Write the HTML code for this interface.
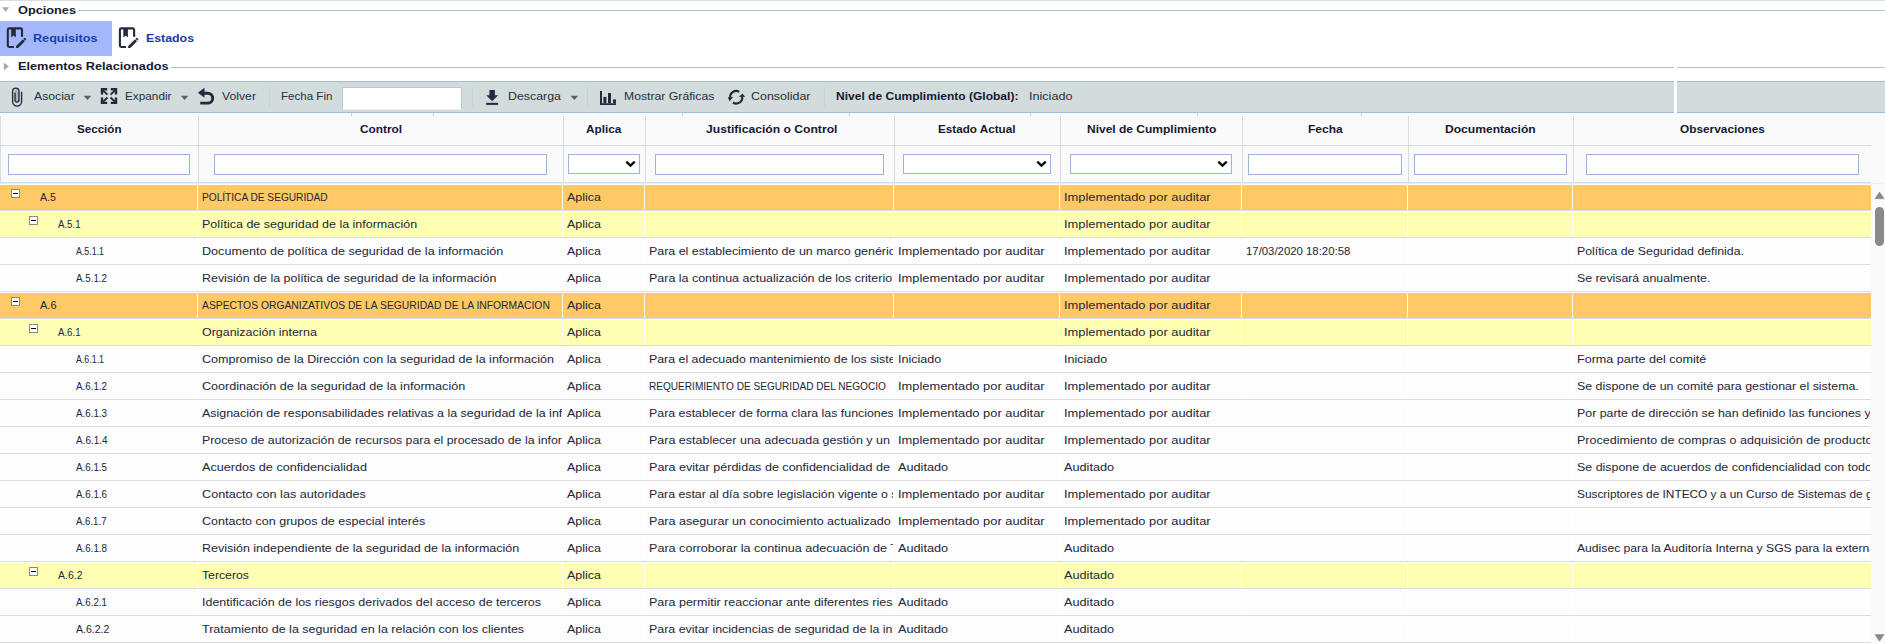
<!DOCTYPE html>
<html lang="es">
<head>
<meta charset="utf-8">
<title>Requisitos</title>
<style>
*{box-sizing:border-box;margin:0;padding:0}
html,body{width:1885px;height:644px;overflow:hidden;background:#fff}
body{position:relative;font-family:"Liberation Sans",sans-serif;font-size:11.5px;color:#23263a}
.abs{position:absolute}
.t{display:inline-block;transform-origin:0 50%;white-space:nowrap}
/* top */
#topline{position:absolute;left:0;top:0;width:1885px;height:1px;background:#d9e0e0}
.leg{position:absolute;left:18px;font-weight:bold;font-size:11.5px;line-height:16px;white-space:nowrap;color:#151931;transform-origin:0 50%}
.legline{position:absolute;height:1px;background:#a9c0de}
.tri{position:absolute;width:0;height:0}
.tab{position:absolute;top:21px;height:35px}
.tabt{position:absolute;top:29.800px;font-weight:bold;font-size:11.5px;line-height:16px;white-space:nowrap;transform-origin:0 50%}
/* toolbar */
#tb{position:absolute;left:0;top:81px;width:1885px;height:32px;background:#d3dcdc;border-top:1px solid #a3bad9;border-bottom:1px solid #a3bad9}
.tbt{position:absolute;top:6px;line-height:16px;white-space:nowrap;transform-origin:0 50%;color:#2a2d40}
.tbs{position:absolute;top:5px;width:1px;height:20px;background:#bfd2e8}
.dd{position:absolute;top:13.800px;width:0;height:0;border-left:3.800px solid transparent;border-right:3.800px solid transparent;border-top:4.300px solid #565d6a}
.ic{position:absolute}
/* header */
#hd{position:absolute;left:0;top:113px;width:1885px;height:71px;background:#fafafa}
.ht{position:absolute;top:8px;line-height:16px;font-weight:bold;white-space:nowrap;transform-origin:0 50%;color:#151931}
.hs{position:absolute;top:3px;width:1px;height:67px;background:#d5dcdc}
#hl1{position:absolute;left:0;top:32px;width:1871px;height:1px;background:#d5dcdc}
#hl2{position:absolute;left:0;top:69px;width:1871px;height:2px;background:linear-gradient(#d5dcdc 50%,#e9eded 50%)}
#hl3{position:absolute;left:1871px;top:70px;width:14px;height:1px;background:#ececec}
.fin,.fse{position:absolute;top:41px;height:21px;background:#fff;border:1px solid #9ab5d9;display:block}
.fse{height:20px}
.fse svg{position:absolute;right:2.600px;top:5.300px}
/* grid */
.row{position:absolute;left:0;width:1871px;height:27px;border-top:1px solid #fff;border-bottom:1px solid #d8dede;background:#fdfdfd}
.r0{background:#ffc966}
.r1{background:#ffffb3}
.c{position:absolute;top:0;height:25px;line-height:25px;padding-left:4px;overflow:hidden;white-space:nowrap;border-left:1px solid rgba(255,255,255,.92);margin-left:-1px}
.c0{padding-left:0;border-left:none;margin-left:0}
.ex{position:absolute;top:4px;width:9px;height:9px;background:#fff;border:1px solid #888}
.ex:after{content:"";position:absolute;left:1px;top:3px;width:5px;height:1px;background:#000}
/* scrollbar */
#sb{position:absolute;left:1871px;top:184px;width:14px;height:460px;background:#fafafa}
#sbt{position:absolute;left:4px;top:23px;width:9px;height:38.500px;border-radius:4.500px;background:#8a8a8a}
</style>
</head>
<body>
<div id="topline"></div>

<!-- Opciones -->

<span class="leg" style="top:1.800px;transform:scaleX(1.1068)">Opciones</span>
<i class="legline" style="left:78px;top:10px;width:1807px"></i>

<div class="tab" style="left:0;width:112px;background:#a6b8fc"></div>
<span class="tabt" style="left:33px;color:#1740b0;transform:scaleX(1.0972)">Requisitos</span>
<span class="tabt" style="left:145.800px;color:#1b39a2;transform:scaleX(1.0729)">Estados</span>

<!-- Elementos Relacionados -->

<span class="leg" style="top:58.400px;transform:scaleX(1.1056)">Elementos Relacionados</span>
<i class="legline" style="left:171px;top:67px;width:1714px"></i>

<!-- toolbar -->
<div id="tb">
  <span class="tbt" style="left:34.400px;transform:scaleX(1.0614)">Asociar</span>
  <span class="tbt" style="left:125.400px;transform:scaleX(1.0245)">Expandir</span>
  <span class="tbt" style="left:222px;transform:scaleX(1.0638)">Volver</span>
  <i class="tbs" style="left:269px"></i>
  <span class="tbt" style="left:281.400px;transform:scaleX(1.0052)">Fecha Fin</span>
  <i class="abs" style="left:342px;top:5px;width:120px;height:23px;background:#fff;border:1px solid #b5c8e2;border-bottom-color:#e8eef4"></i>
  <i class="tbs" style="left:472px"></i>
  <span class="tbt" style="left:508.200px;transform:scaleX(1.0769)">Descarga</span>
  <i class="tbs" style="left:587px"></i>
  <span class="tbt" style="left:623.700px;transform:scaleX(1.0625)">Mostrar Gráficas</span>
  <span class="tbt" style="left:751.300px;transform:scaleX(1.0823)">Consolidar</span>
  <i class="tbs" style="left:824px"></i>
  <span class="tbt" style="left:836.200px;font-weight:bold;color:#151931;transform:scaleX(1.0457)">Nivel de Cumplimiento (Global):</span>
  <span class="tbt" style="left:1028.800px;transform:scaleX(1.0949)">Iniciado</span>
</div>

<!-- icons overlay (page coordinates) -->
<svg class="abs" style="left:0;top:0;pointer-events:none;z-index:5" width="1885" height="644" viewBox="0 0 1885 644">

 <!-- triangles -->
 <path d="M2 7.300H9.200L5.600 12.100Z" fill="#a9a9a9"/>
 <path d="M3.900 62.600L8.900 66.450L3.900 70.300Z" fill="#a9a9a9"/>
 <g fill="#59606c">
  <path d="M83.700 95.800H91.300L87.500 100.100Z"/>
  <path d="M180.800 95.800H188.400L184.600 100.100Z"/>
  <path d="M570.600 95.800H578.200L574.400 100.100Z"/>
 </g>
 <g fill="#8a8a8a">
  <path d="M1874.900 198.700L1879.500 192L1884.100 198.700Z" stroke="#8a8a8a" stroke-width="0.600" stroke-linejoin="round"/>
  <path d="M1874.900 634.600L1879.500 641.200L1884.100 634.600Z" stroke="#8a8a8a" stroke-width="0.600" stroke-linejoin="round"/>
 </g>
 <!-- tab icon 1 -->
 <g id="tabicon">
  <path d="M13.900 47H9.200A1.400 1.400 0 0 1 7.800 45.600V29.800A1.400 1.400 0 0 1 9.200 28.400H20.600A1.400 1.400 0 0 1 22 29.800V36.800" fill="none" stroke="#222a3c" stroke-width="2.100"/>
  <path d="M22 36.800 L22 34.500 L23.050 34.500 L23.050 36 L21.200 37.800 Z" fill="#222a3c"/>
  <path d="M11.200 28.400H15.800V37.400L13.500 35.600L11.200 37.400Z" fill="#222a3c"/>
  <path d="M16.100 46 L22.900 39.200 L24.900 41.200 L18.100 48 L16 48.100 Z" fill="#222a3c"/>
  <path transform="translate(-0.500 0.500)" d="M23.900 38.200 L24.500 37.600 a0.700 0.700 0 0 1 1 0 L26.500 38.600 a0.700 0.700 0 0 1 0 1 L25.900 40.200 Z" fill="#222a3c"/>
 </g>
 <use href="#tabicon" x="112.100" y="0"/>

 <!-- paperclip -->
 <rect x="15" y="88.500" width="4" height="13.500" rx="2" fill="#aab4bc"/>
 <path d="M21.600 92.200V101.600A4.500 4.500 0 0 1 12.600 101.600V91.300A3.200 3.200 0 0 1 19 91.300V100.100A2 2 0 0 1 15 100.100V93" fill="none" stroke="#262d3e" stroke-width="1.400" stroke-linecap="round"/>

 <!-- expand arrows -->
 <g stroke="#232b3d" stroke-width="2.400" fill="none">
  <path d="M107.200 89.300H102V94.600"/>
  <path d="M110.800 89.300H116V94.600"/>
  <path d="M107.200 102.900H102V97.600"/>
  <path d="M110.800 102.900H116V97.600"/>
 </g>
 <g stroke="#232b3d" stroke-width="1.900" fill="none">
  <path d="M102.500 89.800L107.400 94.700M115.500 89.800L110.600 94.700M102.500 102.400L107.400 97.500M115.500 102.400L110.600 97.500"/>
 </g>

 <!-- undo -->
 <path d="M203.500 93.200H207.700A4.950 4.950 0 0 1 207.700 103.100H200.200" fill="none" stroke="#232b3d" stroke-width="2.900"/>
 <path d="M197.900 92.700L204.500 87.800V97.700Z" fill="#232b3d"/>

 <!-- download -->
 <path d="M489.400 90.100H494.900V95.200H498.100L492.150 101.200L486.200 95.200H489.400Z" fill="#232b3d"/>
 <rect x="486.200" y="102.800" width="11.900" height="2.100" fill="#232b3d"/>

 <!-- chart -->
 <path d="M600 91H602V103.200H616V105H600Z" fill="#232b3d"/>
 <rect x="603.400" y="96.900" width="3" height="6.300" fill="#232b3d"/>
 <rect x="608" y="93" width="3" height="10.200" fill="#232b3d"/>
 <rect x="613" y="99.400" width="3" height="3.800" fill="#232b3d"/>

 <!-- sync -->
 <path d="M739.300 91.800A6.050 6.050 0 0 0 730.200 97.600" fill="none" stroke="#1f2739" stroke-width="2.100"/>
 <path d="M727.800 97.300L733.100 96.900L729.600 101.200Z" fill="#1f2739"/>
 <path d="M732.900 102.500A6.050 6.050 0 0 0 742.250 96.800" fill="none" stroke="#1f2739" stroke-width="2.100"/>
 <path d="M738.900 97L745.200 96.800L742.400 93.500Z" fill="#1f2739"/>
</svg>
<i class="abs" style="left:1674px;top:43px;width:3px;height:70px;background:#fff"></i>

<!-- header -->
<div id="hd">
<i id="hl1"></i><i id="hl2"></i><i id="hl3"></i>
<span class="ht" style="left:77px;transform:scaleX(1.0090)">Sección</span>
<span class="ht" style="left:359.5px;transform:scaleX(1.0274)">Control</span>
<span class="ht" style="left:586.3px;transform:scaleX(1.0229)">Aplica</span>
<span class="ht" style="left:706.2px;transform:scaleX(1.0547)">Justificación o Control</span>
<span class="ht" style="left:938px;transform:scaleX(1.0159)">Estado Actual</span>
<span class="ht" style="left:1086.5px;transform:scaleX(1.0431)">Nivel de Cumplimiento</span>
<span class="ht" style="left:1307.8px;transform:scaleX(1.0410)">Fecha</span>
<span class="ht" style="left:1445.3px;transform:scaleX(1.0515)">Documentación</span>
<span class="ht" style="left:1680.2px;transform:scaleX(1.0296)">Observaciones</span>
<i class="hs" style="left:0px"></i>
<i class="hs" style="left:198px"></i>
<i class="hs" style="left:563px"></i>
<i class="hs" style="left:645px"></i>
<i class="hs" style="left:894px"></i>
<i class="hs" style="left:1060px"></i>
<i class="hs" style="left:1242px"></i>
<i class="hs" style="left:1408px"></i>
<i class="hs" style="left:1573px"></i>
<i class="fin" style="left:8px;width:182px"></i>
<i class="fin" style="left:214px;width:333px"></i>
<i class="fse" style="left:568px;width:72px"><svg viewBox="0 0 11 8" width="11" height="8"><path d="M1.300 1.700 L5.500 5.700 L9.700 1.700" fill="none" stroke="#0a0a0a" stroke-width="2.300" stroke-linejoin="miter"/></svg></i>
<i class="fin" style="left:655px;width:229px"></i>
<i class="fse" style="left:903px;width:148px"><svg viewBox="0 0 11 8" width="11" height="8"><path d="M1.300 1.700 L5.500 5.700 L9.700 1.700" fill="none" stroke="#0a0a0a" stroke-width="2.300" stroke-linejoin="miter"/></svg></i>
<i class="fse" style="left:1070px;width:162px"><svg viewBox="0 0 11 8" width="11" height="8"><path d="M1.300 1.700 L5.500 5.700 L9.700 1.700" fill="none" stroke="#0a0a0a" stroke-width="2.300" stroke-linejoin="miter"/></svg></i>
<i class="fin" style="left:1248px;width:154px"></i>
<i class="fin" style="left:1414px;width:153px"></i>
<i class="fin" style="left:1586px;width:273px"></i>
</div>
<i class="abs" style="left:351px;top:113px;width:1px;height:3px;background:#cdd5d8"></i><i class="abs" style="left:433px;top:113px;width:1px;height:3px;background:#cdd5d8"></i><i class="abs" style="left:682px;top:113px;width:1px;height:3px;background:#cdd5d8"></i><i class="abs" style="left:849px;top:113px;width:1px;height:3px;background:#cdd5d8"></i><i class="abs" style="left:1030px;top:113px;width:1px;height:3px;background:#cdd5d8"></i><i class="abs" style="left:1197px;top:113px;width:1px;height:3px;background:#cdd5d8"></i><i class="abs" style="left:1361px;top:113px;width:1px;height:3px;background:#cdd5d8"></i>

<!-- grid -->
<div class="row r0" style="top:184px"><div class="c c0" style="left:0px;width:198px"><i class="ex" style="left:11px"></i><span class="t" style="position:absolute;left:39.6px;top:0;transform:scaleX(0.9269)">A.5</span></div><div class="c" style="left:198px;width:365px"><span class="t" style="transform:scaleX(0.8817)">POLÍTICA DE SEGURIDAD</span></div><div class="c" style="left:563px;width:82px"><span class="t" style="transform:scaleX(1.0855)">Aplica</span></div><div class="c" style="left:645px;width:249px"></div><div class="c" style="left:894px;width:166px"></div><div class="c" style="left:1060px;width:182px"><span class="t" style="transform:scaleX(1.1187)">Implementado por auditar</span></div><div class="c" style="left:1242px;width:166px"></div><div class="c" style="left:1408px;width:165px"></div><div class="c" style="left:1573px;width:298px"></div></div>
<div class="row r1" style="top:211px"><div class="c c0" style="left:0px;width:198px"><i class="ex" style="left:29px"></i><span class="t" style="position:absolute;left:57.9px;top:0;transform:scaleX(0.8379)">A.5.1</span></div><div class="c" style="left:198px;width:365px"><span class="t" style="transform:scaleX(1.0854)">Política de seguridad de la información</span></div><div class="c" style="left:563px;width:82px"><span class="t" style="transform:scaleX(1.0855)">Aplica</span></div><div class="c" style="left:645px;width:249px"></div><div class="c" style="left:894px;width:166px"></div><div class="c" style="left:1060px;width:182px"><span class="t" style="transform:scaleX(1.1187)">Implementado por auditar</span></div><div class="c" style="left:1242px;width:166px"></div><div class="c" style="left:1408px;width:165px"></div><div class="c" style="left:1573px;width:298px"></div></div>
<div class="row r2" style="top:238px"><div class="c c0" style="left:0px;width:198px"><span class="t" style="position:absolute;left:76.3px;top:0;transform:scaleX(0.7683)">A.5.1.1</span></div><div class="c" style="left:198px;width:365px"><span class="t" style="transform:scaleX(1.0961)">Documento de política de seguridad de la información</span></div><div class="c" style="left:563px;width:82px"><span class="t" style="transform:scaleX(1.0855)">Aplica</span></div><div class="c" style="left:645px;width:249px"><span class="t" style="transform:scaleX(1.0806)">Para el establecimiento de un marco genérico</span></div><div class="c" style="left:894px;width:166px"><span class="t" style="transform:scaleX(1.1187)">Implementado por auditar</span></div><div class="c" style="left:1060px;width:182px"><span class="t" style="transform:scaleX(1.1187)">Implementado por auditar</span></div><div class="c" style="left:1242px;width:166px"><span class="t" style="transform:scaleX(0.9885)">17/03/2020 18:20:58</span></div><div class="c" style="left:1408px;width:165px"></div><div class="c" style="left:1573px;width:298px"><span class="t" style="transform:scaleX(1.0699)">Política de Seguridad definida.</span></div></div>
<div class="row r2" style="top:265px"><div class="c c0" style="left:0px;width:198px"><span class="t" style="position:absolute;left:76.3px;top:0;transform:scaleX(0.8506)">A.5.1.2</span></div><div class="c" style="left:198px;width:365px"><span class="t" style="transform:scaleX(1.0811)">Revisión de la política de seguridad de la información</span></div><div class="c" style="left:563px;width:82px"><span class="t" style="transform:scaleX(1.0855)">Aplica</span></div><div class="c" style="left:645px;width:249px"><span class="t" style="transform:scaleX(1.0835)">Para la continua actualización de los criterio</span></div><div class="c" style="left:894px;width:166px"><span class="t" style="transform:scaleX(1.1187)">Implementado por auditar</span></div><div class="c" style="left:1060px;width:182px"><span class="t" style="transform:scaleX(1.1187)">Implementado por auditar</span></div><div class="c" style="left:1242px;width:166px"></div><div class="c" style="left:1408px;width:165px"></div><div class="c" style="left:1573px;width:298px"><span class="t" style="transform:scaleX(1.0694)">Se revisará anualmente.</span></div></div>
<div class="row r0" style="top:292px"><div class="c c0" style="left:0px;width:198px"><i class="ex" style="left:11px"></i><span class="t" style="position:absolute;left:39.6px;top:0;transform:scaleX(0.9559)">A.6</span></div><div class="c" style="left:198px;width:365px"><span class="t" style="transform:scaleX(0.8978)">ASPECTOS ORGANIZATIVOS DE LA SEGURIDAD DE LA INFORMACION</span></div><div class="c" style="left:563px;width:82px"><span class="t" style="transform:scaleX(1.0855)">Aplica</span></div><div class="c" style="left:645px;width:249px"></div><div class="c" style="left:894px;width:166px"></div><div class="c" style="left:1060px;width:182px"><span class="t" style="transform:scaleX(1.1187)">Implementado por auditar</span></div><div class="c" style="left:1242px;width:166px"></div><div class="c" style="left:1408px;width:165px"></div><div class="c" style="left:1573px;width:298px"></div></div>
<div class="row r1" style="top:319px"><div class="c c0" style="left:0px;width:198px"><i class="ex" style="left:29px"></i><span class="t" style="position:absolute;left:57.9px;top:0;transform:scaleX(0.8379)">A.6.1</span></div><div class="c" style="left:198px;width:365px"><span class="t" style="transform:scaleX(1.0818)">Organización interna</span></div><div class="c" style="left:563px;width:82px"><span class="t" style="transform:scaleX(1.0855)">Aplica</span></div><div class="c" style="left:645px;width:249px"></div><div class="c" style="left:894px;width:166px"></div><div class="c" style="left:1060px;width:182px"><span class="t" style="transform:scaleX(1.1187)">Implementado por auditar</span></div><div class="c" style="left:1242px;width:166px"></div><div class="c" style="left:1408px;width:165px"></div><div class="c" style="left:1573px;width:298px"></div></div>
<div class="row r2" style="top:346px"><div class="c c0" style="left:0px;width:198px"><span class="t" style="position:absolute;left:76.3px;top:0;transform:scaleX(0.7683)">A.6.1.1</span></div><div class="c" style="left:198px;width:365px"><span class="t" style="transform:scaleX(1.0902)">Compromiso de la Dirección con la seguridad de la información</span></div><div class="c" style="left:563px;width:82px"><span class="t" style="transform:scaleX(1.0855)">Aplica</span></div><div class="c" style="left:645px;width:249px"><span class="t" style="transform:scaleX(1.0744)">Para el adecuado mantenimiento de los sistemas</span></div><div class="c" style="left:894px;width:166px"><span class="t" style="transform:scaleX(1.0899)">Iniciado</span></div><div class="c" style="left:1060px;width:182px"><span class="t" style="transform:scaleX(1.0899)">Iniciado</span></div><div class="c" style="left:1242px;width:166px"></div><div class="c" style="left:1408px;width:165px"></div><div class="c" style="left:1573px;width:298px"><span class="t" style="transform:scaleX(1.0927)">Forma parte del comité</span></div></div>
<div class="row r2" style="top:373px"><div class="c c0" style="left:0px;width:198px"><span class="t" style="position:absolute;left:76.3px;top:0;transform:scaleX(0.8506)">A.6.1.2</span></div><div class="c" style="left:198px;width:365px"><span class="t" style="transform:scaleX(1.0950)">Coordinación de la seguridad de la información</span></div><div class="c" style="left:563px;width:82px"><span class="t" style="transform:scaleX(1.0855)">Aplica</span></div><div class="c" style="left:645px;width:249px"><span class="t" style="transform:scaleX(0.8762)">REQUERIMIENTO DE SEGURIDAD DEL NEGOCIO</span></div><div class="c" style="left:894px;width:166px"><span class="t" style="transform:scaleX(1.1187)">Implementado por auditar</span></div><div class="c" style="left:1060px;width:182px"><span class="t" style="transform:scaleX(1.1187)">Implementado por auditar</span></div><div class="c" style="left:1242px;width:166px"></div><div class="c" style="left:1408px;width:165px"></div><div class="c" style="left:1573px;width:298px"><span class="t" style="transform:scaleX(1.0778)">Se dispone de un comité para gestionar el sistema.</span></div></div>
<div class="row r2" style="top:400px"><div class="c c0" style="left:0px;width:198px"><span class="t" style="position:absolute;left:76.3px;top:0;transform:scaleX(0.8506)">A.6.1.3</span></div><div class="c" style="left:198px;width:365px"><span class="t" style="transform:scaleX(1.0816)">Asignación de responsabilidades relativas a la seguridad de la información</span></div><div class="c" style="left:563px;width:82px"><span class="t" style="transform:scaleX(1.0855)">Aplica</span></div><div class="c" style="left:645px;width:249px"><span class="t" style="transform:scaleX(1.0757)">Para establecer de forma clara las funciones y</span></div><div class="c" style="left:894px;width:166px"><span class="t" style="transform:scaleX(1.1187)">Implementado por auditar</span></div><div class="c" style="left:1060px;width:182px"><span class="t" style="transform:scaleX(1.1187)">Implementado por auditar</span></div><div class="c" style="left:1242px;width:166px"></div><div class="c" style="left:1408px;width:165px"></div><div class="c" style="left:1573px;width:298px"><span class="t" style="transform:scaleX(1.0756)">Por parte de dirección se han definido las funciones y responsabilidades</span></div></div>
<div class="row r2" style="top:427px"><div class="c c0" style="left:0px;width:198px"><span class="t" style="position:absolute;left:76.3px;top:0;transform:scaleX(0.8644)">A.6.1.4</span></div><div class="c" style="left:198px;width:365px"><span class="t" style="transform:scaleX(1.0724)">Proceso de autorización de recursos para el procesado de la información</span></div><div class="c" style="left:563px;width:82px"><span class="t" style="transform:scaleX(1.0855)">Aplica</span></div><div class="c" style="left:645px;width:249px"><span class="t" style="transform:scaleX(1.0859)">Para establecer una adecuada gestión y un control</span></div><div class="c" style="left:894px;width:166px"><span class="t" style="transform:scaleX(1.1187)">Implementado por auditar</span></div><div class="c" style="left:1060px;width:182px"><span class="t" style="transform:scaleX(1.1187)">Implementado por auditar</span></div><div class="c" style="left:1242px;width:166px"></div><div class="c" style="left:1408px;width:165px"></div><div class="c" style="left:1573px;width:298px"><span class="t" style="transform:scaleX(1.0901)">Procedimiento de compras o adquisición de productos</span></div></div>
<div class="row r2" style="top:454px"><div class="c c0" style="left:0px;width:198px"><span class="t" style="position:absolute;left:76.3px;top:0;transform:scaleX(0.8506)">A.6.1.5</span></div><div class="c" style="left:198px;width:365px"><span class="t" style="transform:scaleX(1.0976)">Acuerdos de confidencialidad</span></div><div class="c" style="left:563px;width:82px"><span class="t" style="transform:scaleX(1.0855)">Aplica</span></div><div class="c" style="left:645px;width:249px"><span class="t" style="transform:scaleX(1.0922)">Para evitar pérdidas de confidencialidad de la</span></div><div class="c" style="left:894px;width:166px"><span class="t" style="transform:scaleX(1.1035)">Auditado</span></div><div class="c" style="left:1060px;width:182px"><span class="t" style="transform:scaleX(1.1035)">Auditado</span></div><div class="c" style="left:1242px;width:166px"></div><div class="c" style="left:1408px;width:165px"></div><div class="c" style="left:1573px;width:298px"><span class="t" style="transform:scaleX(1.0802)">Se dispone de acuerdos de confidencialidad con todos</span></div></div>
<div class="row r2" style="top:481px"><div class="c c0" style="left:0px;width:198px"><span class="t" style="position:absolute;left:76.3px;top:0;transform:scaleX(0.8506)">A.6.1.6</span></div><div class="c" style="left:198px;width:365px"><span class="t" style="transform:scaleX(1.1003)">Contacto con las autoridades</span></div><div class="c" style="left:563px;width:82px"><span class="t" style="transform:scaleX(1.0855)">Aplica</span></div><div class="c" style="left:645px;width:249px"><span class="t" style="transform:scaleX(1.0708)">Para estar al día sobre legislación vigente o su</span></div><div class="c" style="left:894px;width:166px"><span class="t" style="transform:scaleX(1.1187)">Implementado por auditar</span></div><div class="c" style="left:1060px;width:182px"><span class="t" style="transform:scaleX(1.1187)">Implementado por auditar</span></div><div class="c" style="left:1242px;width:166px"></div><div class="c" style="left:1408px;width:165px"></div><div class="c" style="left:1573px;width:298px"><span class="t" style="transform:scaleX(1.0296)">Suscriptores de INTECO y a un Curso de Sistemas de gestión</span></div></div>
<div class="row r2" style="top:508px"><div class="c c0" style="left:0px;width:198px"><span class="t" style="position:absolute;left:76.3px;top:0;transform:scaleX(0.8369)">A.6.1.7</span></div><div class="c" style="left:198px;width:365px"><span class="t" style="transform:scaleX(1.0877)">Contacto con grupos de especial interés</span></div><div class="c" style="left:563px;width:82px"><span class="t" style="transform:scaleX(1.0855)">Aplica</span></div><div class="c" style="left:645px;width:249px"><span class="t" style="transform:scaleX(1.0927)">Para asegurar un conocimiento actualizado</span></div><div class="c" style="left:894px;width:166px"><span class="t" style="transform:scaleX(1.1187)">Implementado por auditar</span></div><div class="c" style="left:1060px;width:182px"><span class="t" style="transform:scaleX(1.1187)">Implementado por auditar</span></div><div class="c" style="left:1242px;width:166px"></div><div class="c" style="left:1408px;width:165px"></div><div class="c" style="left:1573px;width:298px"></div></div>
<div class="row r2" style="top:535px"><div class="c c0" style="left:0px;width:198px"><span class="t" style="position:absolute;left:76.3px;top:0;transform:scaleX(0.8506)">A.6.1.8</span></div><div class="c" style="left:198px;width:365px"><span class="t" style="transform:scaleX(1.0857)">Revisión independiente de la seguridad de la información</span></div><div class="c" style="left:563px;width:82px"><span class="t" style="transform:scaleX(1.0855)">Aplica</span></div><div class="c" style="left:645px;width:249px"><span class="t" style="transform:scaleX(1.0954)">Para corroborar la continua adecuación de TI</span></div><div class="c" style="left:894px;width:166px"><span class="t" style="transform:scaleX(1.1035)">Auditado</span></div><div class="c" style="left:1060px;width:182px"><span class="t" style="transform:scaleX(1.1035)">Auditado</span></div><div class="c" style="left:1242px;width:166px"></div><div class="c" style="left:1408px;width:165px"></div><div class="c" style="left:1573px;width:298px"><span class="t" style="transform:scaleX(1.0561)">Audisec para la Auditoría Interna y SGS para la externa</span></div></div>
<div class="row r1" style="top:562px"><div class="c c0" style="left:0px;width:198px"><i class="ex" style="left:29px"></i><span class="t" style="position:absolute;left:57.9px;top:0;transform:scaleX(0.9124)">A.6.2</span></div><div class="c" style="left:198px;width:365px"><span class="t" style="transform:scaleX(1.0636)">Terceros</span></div><div class="c" style="left:563px;width:82px"><span class="t" style="transform:scaleX(1.0855)">Aplica</span></div><div class="c" style="left:645px;width:249px"></div><div class="c" style="left:894px;width:166px"></div><div class="c" style="left:1060px;width:182px"><span class="t" style="transform:scaleX(1.1035)">Auditado</span></div><div class="c" style="left:1242px;width:166px"></div><div class="c" style="left:1408px;width:165px"></div><div class="c" style="left:1573px;width:298px"></div></div>
<div class="row r2" style="top:589px"><div class="c c0" style="left:0px;width:198px"><span class="t" style="position:absolute;left:76.3px;top:0;transform:scaleX(0.8506)">A.6.2.1</span></div><div class="c" style="left:198px;width:365px"><span class="t" style="transform:scaleX(1.0823)">Identificación de los riesgos derivados del acceso de terceros</span></div><div class="c" style="left:563px;width:82px"><span class="t" style="transform:scaleX(1.0855)">Aplica</span></div><div class="c" style="left:645px;width:249px"><span class="t" style="transform:scaleX(1.0885)">Para permitir reaccionar ante diferentes riesgos</span></div><div class="c" style="left:894px;width:166px"><span class="t" style="transform:scaleX(1.1035)">Auditado</span></div><div class="c" style="left:1060px;width:182px"><span class="t" style="transform:scaleX(1.1035)">Auditado</span></div><div class="c" style="left:1242px;width:166px"></div><div class="c" style="left:1408px;width:165px"></div><div class="c" style="left:1573px;width:298px"></div></div>
<div class="row r2" style="top:616px"><div class="c c0" style="left:0px;width:198px"><span class="t" style="position:absolute;left:76.3px;top:0;transform:scaleX(0.9165)">A.6.2.2</span></div><div class="c" style="left:198px;width:365px"><span class="t" style="transform:scaleX(1.0875)">Tratamiento de la seguridad en la relación con los clientes</span></div><div class="c" style="left:563px;width:82px"><span class="t" style="transform:scaleX(1.0855)">Aplica</span></div><div class="c" style="left:645px;width:249px"><span class="t" style="transform:scaleX(1.0790)">Para evitar incidencias de seguridad de la información</span></div><div class="c" style="left:894px;width:166px"><span class="t" style="transform:scaleX(1.1035)">Auditado</span></div><div class="c" style="left:1060px;width:182px"><span class="t" style="transform:scaleX(1.1035)">Auditado</span></div><div class="c" style="left:1242px;width:166px"></div><div class="c" style="left:1408px;width:165px"></div><div class="c" style="left:1573px;width:298px"></div></div>

<div id="sb"><i id="sbt"></i></div>
</body>
</html>
